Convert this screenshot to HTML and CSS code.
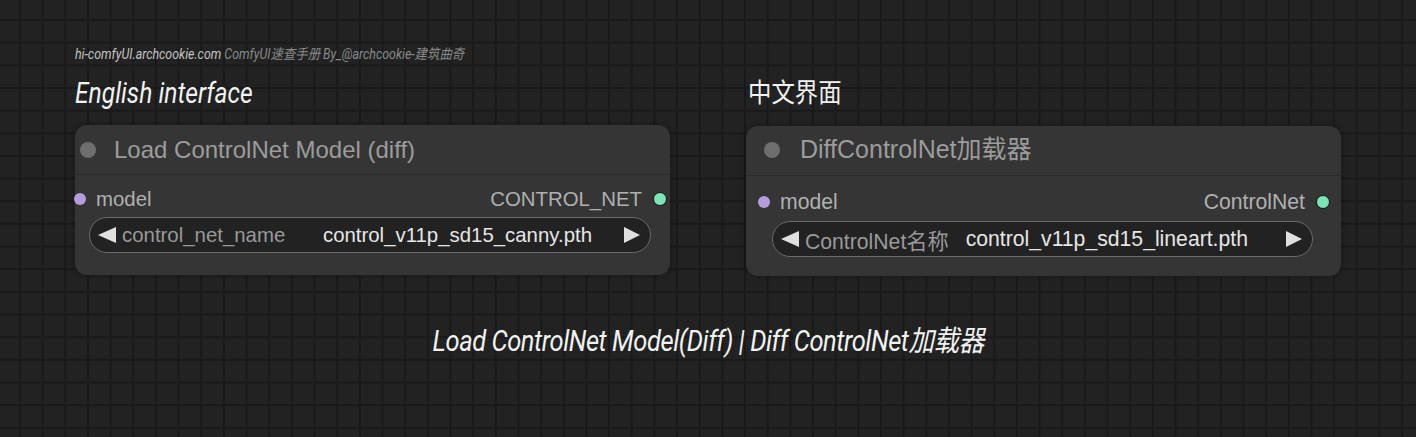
FILE: index.html
```html
<!DOCTYPE html>
<html lang="zh">

<head>
    <meta charset="UTF-8" />
    <meta name="viewport" content="width=device-width, initial-scale=1" />
    <title>Load ControlNet Model (diff)</title>
    <link rel="stylesheet" href="styles.css">
</head>

<body>
    <div class="page">
        <div class="credit">
            <span class="site">hi-comfyUI.archcookie.com</span>
            <span class="by">ComfyUI速查手册 By_@archcookie-建筑曲奇</span>
        </div>

        <div class="columns">
            <div class="column">
                <h2 class="heading"><span class="narrow">English interface</span></h2>
                <div class="node">
                    <div class="node-title">
                        <span class="title-dot"></span>
                        <span class="title-text">Load ControlNet Model (diff)</span>
                    </div>
                    <div class="slot-row">
                        <span class="slot slot-in"><span class="dot dot-model"></span>model</span>
                        <span class="slot slot-out">CONTROL_NET<span class="dot dot-cnet"></span></span>
                    </div>
                    <div class="widget">
                        <span class="arrow arrow-left"></span>
                        <span class="widget-label">control_net_name</span>
                        <span class="widget-value">control_v11p_sd15_canny.pth</span>
                        <span class="arrow arrow-right"></span>
                    </div>
                </div>
            </div>

            <div class="column">
                <h2 class="heading heading-cn"><span class="narrow">中文界面</span></h2>
                <div class="node node-cn">
                    <div class="node-title">
                        <span class="title-dot"></span>
                        <span class="title-text">DiffControlNet加载器</span>
                    </div>
                    <div class="slot-row">
                        <span class="slot slot-in"><span class="dot dot-model"></span>model</span>
                        <span class="slot slot-out">ControlNet<span class="dot dot-cnet"></span></span>
                    </div>
                    <div class="widget">
                        <span class="arrow arrow-left"></span>
                        <span class="widget-label">ControlNet名称</span>
                        <span class="widget-value">control_v11p_sd15_lineart.pth</span>
                        <span class="arrow arrow-right"></span>
                    </div>
                </div>
            </div>
        </div>

        <!-- 底部标题 -->
        <div class="caption"><span class="narrow">Load ControlNet Model(Diff) | Diff ControlNet加载器</span></div>
    </div>
</body>

</html>
```

FILE: styles.css
```css
body {
    margin: 0;
    height: 437px;
    overflow: hidden;
    background-color: #222222;
    background-image:
        linear-gradient(90deg, #191919 2px, transparent 2px),
        linear-gradient(0deg, #191919 2px, transparent 2px);
    background-size: 22.66px 22.66px;
    background-position: 19px 21px;
    font-family: "Liberation Sans", Arial, "Noto Sans CJK SC", sans-serif;
}

.page {
    padding: 45px 0 0 75px;
}

/* 标题字体偏窄，用 scaleX 模拟 condensed */
.narrow {
    display: inline-block;
    transform: scaleX(0.85);
    transform-origin: left center;
    white-space: nowrap;
}

.credit {
    font-family: "Roboto", "Noto Sans CJK SC", sans-serif;
    font-style: italic;
    font-size: 14px;
    line-height: 18px;
    white-space: nowrap;
    transform: scaleX(0.885);
    transform-origin: left center;
}

.credit .site {
    color: #c4c4c4;
}

.credit .by {
    color: #8a8a8a;
}

.columns {
    display: flex;
    gap: 76px;
    margin-top: 12px;
}

.column {
    width: 595px;
}

.heading {
    margin: 0;
    height: 50px;
    font-family: "Roboto", "Noto Sans CJK SC", sans-serif;
    font-style: italic;
    font-weight: 400;
    font-size: 29px;
    line-height: 36px;
    color: #f2f2f2;
}

.heading-cn {
    font-style: normal;
    font-size: 26px;
    margin-left: 2px;
}

.heading-cn .narrow {
    transform: scaleX(0.9);
}

.node {
    background: #353535;
    border-radius: 12px;
    height: 150px;
    box-shadow: 0 0 6px #0000004d;
}

.node-cn {
    margin-top: 1px;
}

.node-title {
    display: flex;
    align-items: center;
    height: 49px;
    padding-left: 5px;
    border-bottom: 1px solid #2c2c2c;
}

.title-dot {
    width: 16px;
    height: 16px;
    border-radius: 50%;
    background: #6e6e6e;
}

.title-text {
    margin-left: 18px;
    font-size: 24px;
    line-height: 28px;
    color: #9c9c9c;
    white-space: nowrap;
}

.slot-row {
    display: flex;
    justify-content: space-between;
    align-items: center;
    height: 22px;
    margin-top: 13px;
    font-size: 20.4px;
    color: #b0b0b0;
}

.slot {
    display: flex;
    align-items: center;
    gap: 10px;
}

.slot-in {
    margin-left: -1px;
}

.slot-out {
    margin-right: 3px;
    gap: 11px;
}

.dot {
    width: 12px;
    height: 12px;
    border-radius: 50%;
    box-sizing: border-box;
}

.dot-model {
    background: #b39ddb;
}

.dot-cnet {
    background: #7de2b4;
    border: 1.5px solid #111;
    width: 14px;
    height: 14px;
}

.widget {
    display: flex;
    align-items: center;
    height: 34px;
    margin: 7px 19px 0 14px;
    padding: 0 10px 0 8px;
    border: 1.5px solid #6a6a6a;
    border-radius: 18px;
    background: #222222;
    font-size: 20.4px;
    white-space: nowrap;
}

.arrow {
    width: 0;
    height: 0;
    border-top: 8px solid transparent;
    border-bottom: 8px solid transparent;
}

.arrow-left {
    border-right: 18px solid #e0e0e0;
}

.arrow-right {
    border-left: 16px solid #e0e0e0;
}

.widget-label {
    margin-left: 6px;
    color: #999999;
}

.widget-value {
    margin-left: auto;
    margin-right: 32px;
    color: #e6e6e6;
}

/* 中文节点内边距稍大，字号也略大 */
.node-cn .node-title {
    padding-left: 18px;
}

.node-cn .title-dot {
    margin-top: -2px;
}

.node-cn .title-text {
    margin-left: 20px;
    margin-top: -4px;
    font-size: 25px;
}

.node-cn .slot-row {
    margin-top: 15px;
    font-size: 21.2px;
}

.node-cn .slot-in {
    margin-left: 12px;
}

.node-cn .slot-out {
    margin-right: 11px;
}

.node-cn .widget {
    margin: 8px 28px 0 26px;
    font-size: 21.2px;
}

.node-cn .widget-value {
    margin-left: 17px;
    margin-right: auto;
}

.caption {
    margin: 41px 0 0 -75px;
    text-align: center;
    font-family: "Roboto", "Noto Sans CJK SC", sans-serif;
    font-style: italic;
    font-weight: 400;
    font-size: 29px;
    letter-spacing: -0.5px;
    color: #f2f2f2;
}

.caption .narrow {
    transform: scaleX(0.88);
    transform-origin: center;
}
```
